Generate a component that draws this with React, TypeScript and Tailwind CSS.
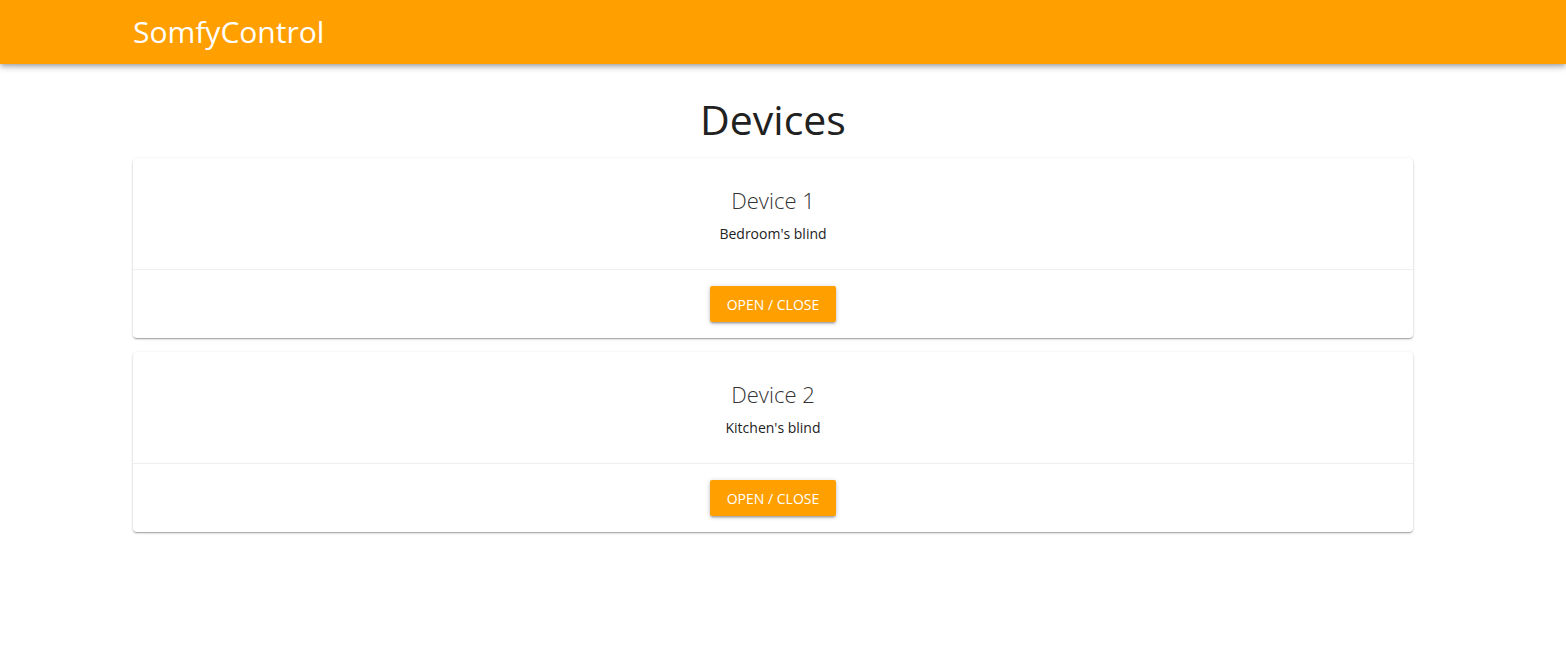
import React from 'react';

const devices = [
  { id: 1, name: 'Device 1', description: "Bedroom's blind" },
  { id: 2, name: 'Device 2', description: "Kitchen's blind" },
];

function DeviceCard({ name, description }: { name: string; description: string }) {
  return (
    <div className="bg-white rounded-[4px] shadow-[0_1px_3px_0_rgba(0,0,0,0.2),0_1px_1px_0_rgba(0,0,0,0.14),0_2px_1px_-1px_rgba(0,0,0,0.12)]">
      <div className="h-[112px] flex flex-col items-center pt-[27px] border-b border-[#eeeeee]">
        <h2 className="text-[22px] font-light leading-[30px] text-[#333]">{name}</h2>
        <p className="text-[14px] leading-[20px] mt-[9px] text-[#222]">{description}</p>
      </div>
      <div className="flex justify-center py-[16px]">
        <button className="h-[36px] w-[126px] bg-[#ffa000] text-white text-[14px] uppercase rounded-[2px] shadow-[0_1px_5px_0_rgba(0,0,0,0.2),0_2px_2px_0_rgba(0,0,0,0.14),0_3px_1px_-2px_rgba(0,0,0,0.12)]">
          Open / Close
        </button>
      </div>
    </div>
  );
}

export default function App() {
  return (
    <div className="min-h-screen bg-white font-['Open_Sans',sans-serif]">
      <header className="h-[64px] bg-[#ffa000] shadow-[0_2px_4px_-1px_rgba(0,0,0,0.2),0_4px_5px_0_rgba(0,0,0,0.14),0_1px_10px_0_rgba(0,0,0,0.12)] flex items-center">
        <div className="w-[1280px] ml-[133px]">
          <h1 className="text-[30px] leading-[40px] text-white -mt-[1px]">SomfyControl</h1>
        </div>
      </header>
      <main className="w-[1280px] ml-[133px]">
        <h1 className="text-center text-[41px] leading-[56px] text-[#212121] mt-[27px]">
          Devices
        </h1>
        <div className="flex flex-col gap-[14px] mt-[11px]">
          {devices.map((d) => (
            <DeviceCard key={d.id} name={d.name} description={d.description} />
          ))}
        </div>
      </main>
    </div>
  );
}
